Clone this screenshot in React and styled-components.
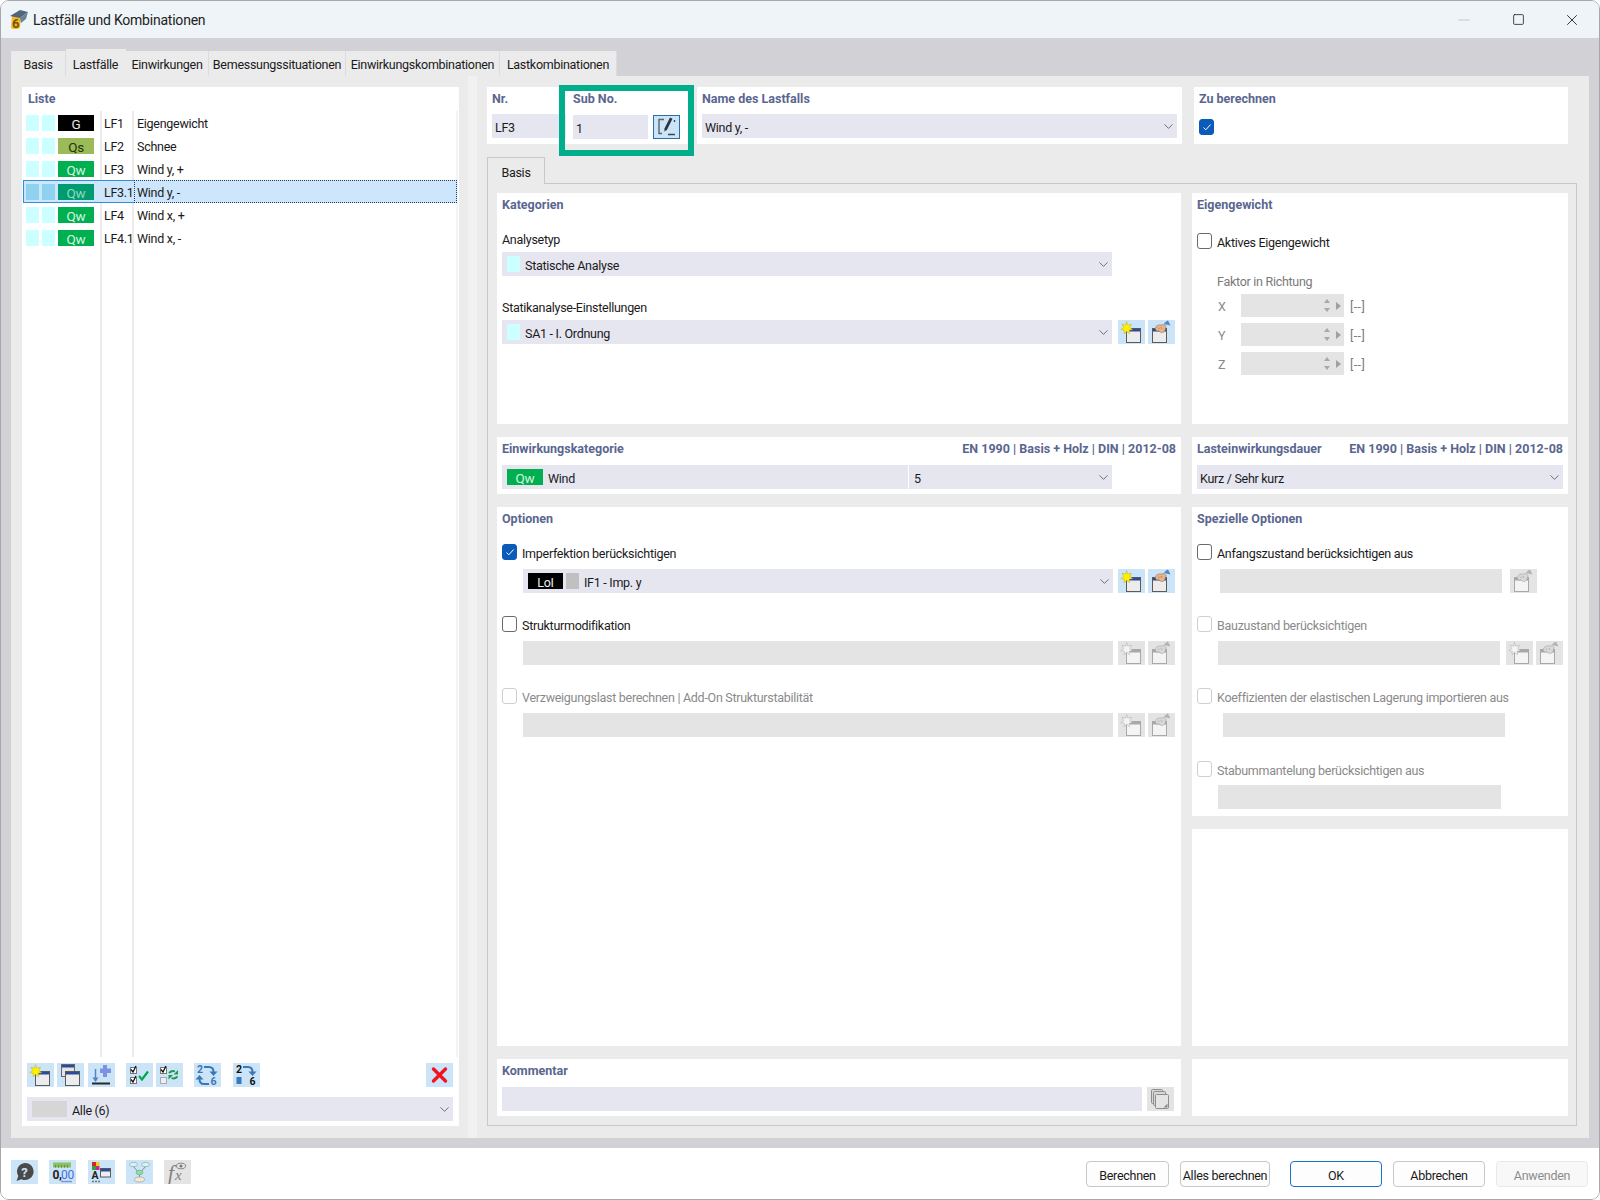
import React from "react";
import styled, { createGlobalStyle } from "styled-components";
import { ChevronDown, Square, X, Minus } from "lucide-react";

const GlobalStyle = createGlobalStyle`
  html, body {
    margin: 0;
    padding: 0;
    background: #fff;
  }
  * {
    box-sizing: border-box;
  }
`;

const font = `Roboto, "Open Sans", sans-serif`;

const tabs = ["Basis", "Lastfälle", "Einwirkungen", "Bemessungssituationen", "Einwirkungskombinationen", "Lastkombinationen"];
const tabWidths = [55, 60, 83, 137, 154, 117];

const rows = [
  { badge: "G", kind: "g", id: "LF1", name: "Eigengewicht" },
  { badge: "Qs", kind: "qs", id: "LF2", name: "Schnee" },
  { badge: "Qw", kind: "qw", id: "LF3", name: "Wind y, +" },
  { badge: "Qw", kind: "qw", id: "LF3.1", name: "Wind y, -", selected: true },
  { badge: "Qw", kind: "qw", id: "LF4", name: "Wind x, +" },
  { badge: "Qw", kind: "qw", id: "LF4.1", name: "Wind x, -" },
];

function WindowGlyph({ x = 6, y = 7, w = 14, h = 14, disabled }) {
  return (
    <g>
      <rect x={x + 0.5} y={y + 0.5} width={w} height={h} fill={disabled ? "#f4f4f4" : "#ececec"} stroke={disabled ? "#a8a8a8" : "#5a5a5a"} />
      <rect x={x + 1} y={y + 1} width={w - 1} height="2.500" fill={disabled ? "#a8a8a8" : "#2d4a9a"} />
    </g>
  );
}

function NewIcon({ disabled }) {
  return (
    <svg width="27" height="24" viewBox="0 0 27 24">
      <WindowGlyph x={8} y={8} disabled={disabled} />
      <path d="M8.500 1.500l1.300 3.700 3.700-1-1.800 3.400 3 2-3.500.6.300 3.600-2.800-2.500-2.600 2.500.2-3.600-3.500-.6 3-2-1.800-3.400 3.700 1z" fill={disabled ? "#f4f4f4" : "#fff200"} stroke={disabled ? "#a8a8a8" : "#c0a830"} strokeWidth="0.500" />
    </svg>
  );
}

function PickIcon({ disabled }) {
  return (
    <svg width="27" height="24" viewBox="0 0 27 24">
      <WindowGlyph x={4} y={8} disabled={disabled} />
      <path d="M7 8.500c1-3 3.500-4 6-3.500l3.500-.5 1.500 2-1 4c-1 2-3 2.500-5 1.500l-1.500-1.500-1.500 1z" fill={disabled ? "#d8d8d8" : "#e6b48c"} stroke={disabled ? "#9a9a9a" : "#8b6240"} strokeWidth="0.500" />
      <path d="M10 7.500l1.500 1.500M13 7l1 2" stroke={disabled ? "#9a9a9a" : "#8b6240"} strokeWidth="0.600" />
      <path d="M16 4c1-2 2.500-3 4-3.500l2.500 5z" fill={disabled ? "#b4b4b4" : "#4f87c8"} />
    </svg>
  );
}

function EditIcon() {
  return (
    <svg width="25" height="22" viewBox="0 0 25 22">
      <path d="M10 3.500H5v14h3" fill="none" stroke="#5a6270" strokeWidth="1.400" />
      <path d="M16 1.500l2.500 1.300-5.500 11-2.600 1.700.1-3z" fill="#2e3440" />
      <path d="M20.500 4v2M14 18.500h7" stroke="#3e4654" strokeWidth="1.400" />
    </svg>
  );
}

function CopyNewIcon() {
  return (
    <svg width="27" height="24" viewBox="0 0 27 24">
      <rect x="4.500" y="1.500" width="13" height="12" fill="#e4e4e4" stroke="#666" />
      <rect x="5" y="2" width="12" height="2.500" fill="#2d4a9a" />
      <rect x="8.500" y="8.500" width="14" height="14" fill="#ececec" stroke="#5a5a5a" />
      <rect x="9" y="9" width="13" height="2.500" fill="#2d4a9a" />
    </svg>
  );
}

function AddBelowIcon() {
  return (
    <svg width="27" height="24" viewBox="0 0 27 24">
      <path d="M15 2h4v3.500h4v4.500h-4v4h-4v-4h-3V5.500h3z" fill="#7b93e0" />
      <path d="M7.500 6v12" stroke="#4f87c8" strokeWidth="1.500" />
      <path d="M4.500 14.500l3 4.500 3-4.500z" fill="#4f87c8" />
      <path d="M4 20.500h18" stroke="#2a2a2a" strokeWidth="1.800" />
    </svg>
  );
}

function CheckAllIcon() {
  return (
    <svg width="27" height="24" viewBox="0 0 27 24">
      <rect x="4.500" y="4.500" width="6" height="6" fill="#fff" stroke="#777" />
      <rect x="4.500" y="14.500" width="6" height="6" fill="#fff" stroke="#777" />
      <path d="M5 6.500l2 2.500 3-6M5 16.500l2 2.500 3-6" fill="none" stroke="#111" strokeWidth="1.300" />
      <path d="M13 13l3 3.500 6-8" fill="none" stroke="#00a84f" strokeWidth="2.200" />
    </svg>
  );
}

function InvertIcon() {
  return (
    <svg width="27" height="24" viewBox="0 0 27 24">
      <rect x="4.500" y="4.500" width="6" height="6" fill="#fff" stroke="#777" />
      <rect x="4.500" y="14.500" width="6" height="6" fill="#e8eef4" stroke="#aaa" />
      <path d="M5 6.500l2 2.500 3-6" fill="none" stroke="#111" strokeWidth="1.300" />
      <path d="M13 10c2-2 4-2.500 6-1.500M21.500 13.500c-2 2-4 2.500-6 1.500" fill="none" stroke="#1e9a4b" strokeWidth="1.800" />
      <path d="M22 7v4.500h-4.500zM12.500 16.500V12H17z" fill="#1e9a4b" />
    </svg>
  );
}

function RenumberIcon() {
  return (
    <svg width="27" height="24" viewBox="0 0 27 24">
      <text x="3" y="10" fontFamily={font} fontSize="10.500" fontWeight="700" fill="#3a78b8">2</text>
      <text x="16.500" y="22" fontFamily={font} fontSize="10.500" fontWeight="700" fill="#3a78b8">6</text>
      <path d="M10 4h5c3 0 4.500 1.500 4.500 5" fill="none" stroke="#3a78b8" strokeWidth="2" />
      <path d="M15.500 8.500l4 4.500 4-4.500z" fill="#3a78b8" />
      <path d="M15 21h-5c-3 0-4.500-1.500-4.500-5" fill="none" stroke="#3a78b8" strokeWidth="2" />
      <path d="M1.500 16.500l4-4.500 4 4.500z" fill="#3a78b8" />
    </svg>
  );
}

function RenumberBlockIcon() {
  return (
    <svg width="27" height="24" viewBox="0 0 27 24">
      <text x="3" y="10" fontFamily={font} fontSize="10.500" fontWeight="700" fill="#111">2</text>
      <text x="16.500" y="22" fontFamily={font} fontSize="10.500" fontWeight="700" fill="#111">6</text>
      <path d="M10 4h5c3 0 4.500 1.500 4.500 5" fill="none" stroke="#3a78b8" strokeWidth="2" />
      <path d="M15.500 8.500l4 4.500 4-4.500z" fill="#3a78b8" />
      <rect x="3.500" y="14" width="5" height="7" fill="#3a78b8" />
    </svg>
  );
}

function DeleteIcon() {
  return (
    <svg width="27" height="24" viewBox="0 0 27 24">
      <path d="M7.500 6l12 12M19.500 6l-12 12" stroke="#f0141e" strokeWidth="3.400" strokeLinecap="round" />
    </svg>
  );
}

function HelpIcon() {
  return (
    <svg width="27" height="24" viewBox="0 0 27 24">
      <path d="M14 3a8.500 8.500 0 1 1-3.500 16.200L5.500 21l1.800-5A8.500 8.500 0 0 1 14 3z" fill="#4a4a4a" />
      <text x="10.300" y="16.500" fontFamily={font} fontSize="13" fontWeight="700" fill="#cce4f7">?</text>
    </svg>
  );
}

function NumberFormatIcon() {
  return (
    <svg width="27" height="24" viewBox="0 0 27 24">
      <rect x="4" y="2.500" width="18" height="5" fill="#8cc063" />
      <path d="M6.500 5v2.500M9.500 5v2.500M12.500 5v2.500M15.500 5v2.500M18.500 5v2.500" stroke="#5e8e3c" />
      <text x="3.500" y="19" fontFamily={font} fontSize="12" fontWeight="700" fill="#222">0,</text>
      <text x="12" y="19" fontFamily={font} fontSize="12" fill="#3e6fe0">00</text>
      <path d="M12 21.500h11" stroke="#7b93e0" strokeWidth="1.400" />
    </svg>
  );
}

function ColorTextIcon() {
  return (
    <svg width="27" height="24" viewBox="0 0 27 24">
      <rect x="4" y="2" width="4" height="4" fill="#e02020" />
      <rect x="8" y="2" width="3.500" height="4" fill="#e8d020" />
      <rect x="4" y="6" width="4" height="4" fill="#30a040" />
      <rect x="8" y="6" width="3.500" height="4" fill="#d02090" />
      <text x="3.500" y="19" fontFamily={font} fontSize="10.500" fontWeight="700" fill="#222">A</text>
      <path d="M4 21.500h2M7 21.500h2M10 21.500h2" stroke="#777" strokeWidth="1.500" />
      <rect x="12.500" y="8.500" width="10" height="8.500" fill="#eee" stroke="#5a5a5a" />
      <rect x="13" y="9" width="9" height="2.500" fill="#2d4a9a" />
    </svg>
  );
}

function TreeIcon() {
  return (
    <svg width="27" height="24" viewBox="0 0 27 24">
      <path d="M7 6l6 7M20 6l-6 7M13.500 14v5" stroke="#7d8f8f" />
      <ellipse cx="7.500" cy="4.500" rx="4" ry="2.200" fill="#d8f2f2" stroke="#8aa" strokeWidth="0.700" />
      <ellipse cx="19.500" cy="4.500" rx="4" ry="2.200" fill="#d8f2f2" stroke="#8aa" strokeWidth="0.700" />
      <ellipse cx="13.500" cy="12.500" rx="3.500" ry="2.200" fill="#8ce09a" stroke="#7a9" strokeWidth="0.700" />
      <ellipse cx="13.500" cy="19.500" rx="5" ry="2.500" fill="#f0ecd0" stroke="#a99" strokeWidth="0.700" />
    </svg>
  );
}

function FormulaIcon() {
  return (
    <svg width="27" height="24" viewBox="0 0 27 24">
      <text x="4" y="20" fontFamily='"Liberation Serif", serif' fontStyle="italic" fontSize="21" fill="#808080">f</text>
      <text x="11" y="20" fontFamily='"Liberation Serif", serif' fontStyle="italic" fontSize="15" fill="#808080">x</text>
      <ellipse cx="17" cy="6" rx="4.500" ry="2.800" fill="none" stroke="#888" />
      <circle cx="17" cy="6" r="1.500" fill="#777" />
    </svg>
  );
}

function NotesIcon() {
  return (
    <svg width="27" height="24" viewBox="0 0 27 24">
      <rect x="4.500" y="2.500" width="11" height="14" rx="1" fill="#d8d8d8" stroke="#8c8c8c" />
      <rect x="6.500" y="4.500" width="12" height="14" rx="1" fill="#d8d8d8" stroke="#8c8c8c" />
      <rect x="8.500" y="7.500" width="13" height="14" rx="1" fill="#e4e4e4" stroke="#8c8c8c" />
      <path d="M16.500 20.500l4-4v4z" fill="#8c8c8c" />
    </svg>
  );
}

function AppLogo() {
  return (
    <svg width="20" height="20" viewBox="0 0 20 20">
      <path d="M4 6c0-1 3-1 6-.5l3 1-1 11c-2 2-7 2-9 .5z" fill="#f2b927" />
      <path d="M2 6L12 0l8 2-8 6z" fill="#51667a" />
      <path d="M12 8l8-6-2 7-5 4z" fill="#6b8296" />
      <text x="4" y="18" fontFamily={font} fontSize="13" fontWeight="700" fill="#7a5206">6</text>
    </svg>
  );
}

function Select({ width, children }) {
  return (
    <SelectBox $width={width}>
      {children}
      <SelectChevron>
        <ChevronDown size={15} strokeWidth={1.300} />
      </SelectChevron>
    </SelectBox>
  );
}

function Spin({ label }) {
  return (
    <SpinRow>
      <SpinLabel>{label}</SpinLabel>
      <SpinInput>
        <SpinArrows>
          <ArrowUp />
          <ArrowDown />
        </SpinArrows>
        <ArrowRight />
      </SpinInput>
      <SpinUnit>[--]</SpinUnit>
    </SpinRow>
  );
}

function Check({ checked, disabled, children, top }) {
  return (
    <CheckRow $top={top} $disabled={disabled}>
      <CheckBox $checked={checked} $disabled={disabled}>
        {checked && (
          <svg width="10" height="10" viewBox="0 0 10 10">
            <path d="M1.500 5.500l2.300 2.300 4.800-5.300" fill="none" stroke="#fff" strokeWidth="1" />
          </svg>
        )}
      </CheckBox>
      {children && <CheckLabel>{children}</CheckLabel>}
    </CheckRow>
  );
}

export default function App() {
  return (
    <>
      <GlobalStyle />
      <Window>
        <TitleBar>
          <AppLogo />
          <TitleText>Lastfälle und Kombinationen</TitleText>
          <WindowControls>
            <WinButton $muted><Minus size={18} strokeWidth={1} /></WinButton>
            <WinButton><Square size={13} strokeWidth={1.500} /></WinButton>
            <WinButton><X size={18} strokeWidth={1.200} /></WinButton>
          </WindowControls>
        </TitleBar>

        <Body>
          <TabStrip>
            {tabs.map((t, i) => (
              <Tab key={t} $width={tabWidths[i]} $active={i === 1}>{t}</Tab>
            ))}
          </TabStrip>

          <TabPanel>
            <ListPane>
              <CardTitle>Liste</CardTitle>
              <ListBody>
                {rows.map((r) => (
                  <ListRow key={r.id}>
                    <SwatchCell $selected={r.selected}>
                      <CyanSquare $selected={r.selected} />
                      <CyanSquare $selected={r.selected} />
                      <Badge $kind={r.kind} $selected={r.selected}>{r.badge}</Badge>
                    </SwatchCell>
                    <IdCell $selected={r.selected}>{r.id}</IdCell>
                    <NameCell $selected={r.selected}>{r.name}</NameCell>
                  </ListRow>
                ))}
              </ListBody>
              <ListToolbar>
                <IconButton><NewIcon /></IconButton>
                <IconButton $left={3}><CopyNewIcon /></IconButton>
                <IconButton $left={4}><AddBelowIcon /></IconButton>
                <IconButton $left={11}><CheckAllIcon /></IconButton>
                <IconButton $left={3}><InvertIcon /></IconButton>
                <IconButton $left={11}><RenumberIcon /></IconButton>
                <IconButton $left={12}><RenumberBlockIcon /></IconButton>
                <ToolbarSpacer />
                <IconButton><DeleteIcon /></IconButton>
              </ListToolbar>
              <ListFilter>
                <Select>
                  <FilterSwatch />
                  <SelectText>Alle (6)</SelectText>
                </Select>
              </ListFilter>
            </ListPane>

            <Splitter />

            <RightPane>
              <TopRow>
                <NrCard>
                  <CardTitle>Nr.</CardTitle>
                  <InputBox $width={74}>LF3</InputBox>
                </NrCard>
                <SubCard>
                  <CardTitle>Sub No.</CardTitle>
                  <FieldRow $gap={5}>
                    <InputBox $width={75}>1</InputBox>
                    <EditButton><EditIcon /></EditButton>
                  </FieldRow>
                </SubCard>
                <NameCard>
                  <CardTitle>Name des Lastfalls</CardTitle>
                  <SelectGap>
                    <Select>
                      <SelectText $flush>Wind y, -</SelectText>
                    </Select>
                  </SelectGap>
                </NameCard>
                <CalcCard>
                  <CardTitle>Zu berechnen</CardTitle>
                  <CalcCheck>
                    <Check checked />
                  </CalcCheck>
                </CalcCard>
                <Highlight />
              </TopRow>

              <InnerTab>Basis</InnerTab>

              <InnerPane>
                <Card>
                  <CardTitle>Kategorien</CardTitle>
                  <FieldLabel $top={13}>Analysetyp</FieldLabel>
                  <Select width={610}>
                    <CyanField />
                    <SelectText>Statische Analyse</SelectText>
                  </Select>
                  <FieldLabel $top={21}>Statikanalyse-Einstellungen</FieldLabel>
                  <FieldRow $gap={0}>
                    <Select width={610}>
                      <CyanField />
                      <SelectText>SA1 - I. Ordnung</SelectText>
                    </Select>
                    <IconButton $left={6}><NewIcon /></IconButton>
                    <IconButton $left={3}><PickIcon /></IconButton>
                  </FieldRow>
                </Card>

                <Card>
                  <CardTitle>Eigengewicht</CardTitle>
                  <Check top={17}>Aktives Eigengewicht</Check>
                  <FactorLabel>Faktor in Richtung</FactorLabel>
                  <Spin label="X" />
                  <Spin label="Y" />
                  <Spin label="Z" />
                </Card>

                <Card>
                  <TitleRow>
                    <CardTitle>Einwirkungskategorie</CardTitle>
                    <CardTitle>EN 1990 | Basis + Holz | DIN | 2012-08</CardTitle>
                  </TitleRow>
                  <Select width={610}>
                    <WindCell>
                      <Badge $kind="qw" $inset>Qw</Badge>
                      <WindLabel>Wind</WindLabel>
                    </WindCell>
                    <SelectDivider />
                    <SelectText $flush>5</SelectText>
                  </Select>
                </Card>

                <Card>
                  <TitleRow>
                    <CardTitle>Lasteinwirkungsdauer</CardTitle>
                    <CardTitle>EN 1990 | Basis + Holz | DIN | 2012-08</CardTitle>
                  </TitleRow>
                  <Select>
                    <SelectText $flush>Kurz / Sehr kurz</SelectText>
                  </Select>
                </Card>

                <Card>
                  <CardTitle>Optionen</CardTitle>
                  <Check checked top={14}>Imperfektion berücksichtigen</Check>
                  <OptionField $left={21}>
                    <Select width={590}>
                      <LolBadge>LoI</LolBadge>
                      <GreySquare />
                      <SelectText>IF1 - Imp. y</SelectText>
                    </Select>
                    <IconButton $left={5}><NewIcon /></IconButton>
                    <IconButton $left={3}><PickIcon /></IconButton>
                  </OptionField>
                  <Check top={23}>Strukturmodifikation</Check>
                  <OptionField $left={21}>
                    <DisabledInput $width={590} />
                    <IconButton $left={5} $disabled><NewIcon disabled /></IconButton>
                    <IconButton $left={3} $disabled><PickIcon disabled /></IconButton>
                  </OptionField>
                  <Check disabled top={23}>Verzweigungslast berechnen | Add-On Strukturstabilität</Check>
                  <OptionField $left={21}>
                    <DisabledInput $width={590} />
                    <IconButton $left={5} $disabled><NewIcon disabled /></IconButton>
                    <IconButton $left={3} $disabled><PickIcon disabled /></IconButton>
                  </OptionField>
                </Card>

                <RightStack>
                  <SpecialCard>
                    <CardTitle>Spezielle Optionen</CardTitle>
                    <Check top={14}>Anfangszustand berücksichtigen aus</Check>
                    <OptionField $left={23}>
                      <DisabledInput $width={282} />
                      <IconButton $left={8} $disabled><PickIcon disabled /></IconButton>
                    </OptionField>
                    <Check disabled top={23}>Bauzustand berücksichtigen</Check>
                    <OptionField $left={21}>
                      <DisabledInput $width={282} />
                      <IconButton $left={6} $disabled><NewIcon disabled /></IconButton>
                      <IconButton $left={3} $disabled><PickIcon disabled /></IconButton>
                    </OptionField>
                    <Check disabled top={23}>Koeffizienten der elastischen Lagerung importieren aus</Check>
                    <OptionField $left={26}>
                      <DisabledInput $width={282} />
                    </OptionField>
                    <Check disabled top={24}>Stabummantelung berücksichtigen aus</Check>
                    <OptionField $left={21} $top={8}>
                      <DisabledInput $width={283} />
                    </OptionField>
                  </SpecialCard>
                  <Card />
                </RightStack>

                <Card>
                  <CardTitle>Kommentar</CardTitle>
                  <FieldRow $gap={5}>
                    <InputBox $width={640} />
                    <IconButton $disabled><NotesIcon /></IconButton>
                  </FieldRow>
                </Card>

                <Card />
              </InnerPane>
            </RightPane>
          </TabPanel>
        </Body>

        <Footer>
          <FooterIcons>
            <IconButton><HelpIcon /></IconButton>
            <IconButton $left={11}><NumberFormatIcon /></IconButton>
            <IconButton $left={12}><ColorTextIcon /></IconButton>
            <IconButton $left={11}><TreeIcon /></IconButton>
            <IconButton $left={11} $disabled><FormulaIcon /></IconButton>
          </FooterIcons>
          <FooterButtons>
            <DialogButton $width={83}>Berechnen</DialogButton>
            <DialogButton $width={90} $left={11}>Alles berechnen</DialogButton>
            <DialogButton $width={92} $left={20} $primary>OK</DialogButton>
            <DialogButton $width={92} $left={11}>Abbrechen</DialogButton>
            <DialogButton $width={92} $left={11} $disabled>Anwenden</DialogButton>
          </FooterButtons>
        </Footer>
      </Window>
    </>
  );
}

const Window = styled.div`
  width: 1600px;
  height: 1200px;
  display: flex;
  flex-direction: column;
  background: #fff;
  border: 1px solid #a8a8a8;
  border-radius: 9px;
  overflow: hidden;
  font-family: ${font};
  font-size: 12.500px;
  letter-spacing: -0.28px;
  color: #1a1a1a;
`;

const TitleBar = styled.div`
  height: 37px;
  flex: none;
  display: flex;
  align-items: center;
  padding-left: 7px;
  background: #eff4f9;
`;

const TitleText = styled.div`
  margin-left: 5px;
  padding-top: 1px;
  font-size: 14px;
  letter-spacing: -0.22px;
  color: #222;
`;

const WindowControls = styled.div`
  margin-left: auto;
  display: flex;
`;

const WinButton = styled.div`
  width: 54px;
  height: 37px;
  display: flex;
  align-items: center;
  justify-content: center;
  color: ${(p) => (p.$muted ? "#b4b8bc" : "#222")};
`;

const Body = styled.div`
  flex: 1;
  min-height: 0;
  display: flex;
  flex-direction: column;
  padding: 11px 10px 10px 10px;
  background: #d2d2d6;
`;

const TabStrip = styled.div`
  height: 27px;
  flex: none;
  display: flex;
  align-items: flex-end;
`;

const Tab = styled.div`
  width: ${(p) => p.$width}px;
  height: ${(p) => (p.$active ? 27 : 25)}px;
  display: flex;
  align-items: center;
  justify-content: center;
  padding-top: ${(p) => (p.$active ? 3 : 1)}px;
  background: #ebebeb;
  border-right: 1px solid ${(p) => (p.$active ? "transparent" : "#dcdce0")};
  white-space: nowrap;
`;

const TabPanel = styled.div`
  flex: 1;
  min-height: 0;
  display: flex;
  padding: 11px 12px 12px 11px;
  background: #ebebeb;
`;

const ListPane = styled.div`
  width: 437px;
  flex: none;
  display: flex;
  flex-direction: column;
  background: #fff;
`;

const CardTitle = styled.div`
  height: 23px;
  display: flex;
  align-items: center;
  font-weight: 700;
  letter-spacing: 0;
  color: #5a6690;
  white-space: nowrap;
  margin-bottom: 1px;
  ${ListPane} > & {
    padding-left: 6px;
  }
`;

const ListBody = styled.div`
  flex: 1;
  min-height: 0;
  padding-left: 1px;
  background:
    linear-gradient(#ececec, #ececec) 78px 0 / 2px 100% no-repeat,
    linear-gradient(#ececec, #ececec) 110px 0 / 2px 100% no-repeat,
    linear-gradient(#f4f4f4, #f4f4f4) 434px 0 / 2px 100% no-repeat;
`;

const ListRow = styled.div`
  height: 23px;
  display: flex;
  width: 434px;
`;

const SwatchCell = styled.div`
  width: 78px;
  flex: none;
  display: flex;
  align-items: center;
  gap: 3px;
  padding-left: 2px;
  background: ${(p) => (p.$selected ? "#cde6fb" : "transparent")};
  border: 1px solid ${(p) => (p.$selected ? "#2f8fd8" : "transparent")};
  border-right: none;
`;

const CyanSquare = styled.div`
  width: 13px;
  height: 16px;
  background: ${(p) => (p.$selected ? "#8fd2f0" : "#ccffff")};
`;

const badgeColors = {
  g: { bg: "#000", fg: "#e8e8e8", sel: "#000" },
  qs: { bg: "#9bbb59", fg: "#26340c", sel: "#8fb26c" },
  qw: { bg: "#00b050", fg: "#d4f4e0", sel: "#009b6e" },
};

const Badge = styled.div`
  width: 36px;
  height: 16px;
  flex: none;
  display: flex;
  align-items: center;
  justify-content: center;
  padding-top: 2px;
  margin-left: ${(p) => (p.$inset ? 5 : 0)}px;
  font-size: 13.500px;
  background: ${(p) => (p.$selected ? badgeColors[p.$kind].sel : badgeColors[p.$kind].bg)};
  color: ${(p) => (p.$selected ? "#8fd8c0" : badgeColors[p.$kind].fg)};
`;

const IdCell = styled.div`
  width: 33px;
  flex: none;
  display: flex;
  align-items: center;
  padding: 2px 0 0 3px;
  background: ${(p) => (p.$selected ? "#cde6fb" : "transparent")};
  border: 1px solid ${(p) => (p.$selected ? "#2f8fd8" : "transparent")};
  border-left: none;
  border-right: none;
  white-space: nowrap;
`;

const NameCell = styled.div`
  flex: 1;
  display: flex;
  align-items: center;
  padding: 2px 0 0 2px;
  background: ${(p) => (p.$selected ? "#cde6fb" : "transparent")};
  border: 1px dotted ${(p) => (p.$selected ? "#1d3f66" : "transparent")};
`;

const ListToolbar = styled.div`
  height: 24px;
  flex: none;
  display: flex;
  margin: 6px 6px 0 5px;
`;

const ToolbarSpacer = styled.div`
  flex: 1;
`;

const IconButton = styled.div`
  width: 27px;
  height: 24px;
  flex: none;
  margin-left: ${(p) => p.$left ?? 0}px;
  background: ${(p) => (p.$disabled ? "#e4e4e4" : "#cce4f7")};
  svg {
    display: block;
  }
`;

const ListFilter = styled.div`
  margin: 10px 6px 5px 5px;
`;

const SelectBox = styled.div`
  width: ${(p) => (p.$width ? `${p.$width}px` : "100%")};
  height: 24px;
  flex: none;
  display: flex;
  align-items: center;
  background: #e6e6f1;
  white-space: nowrap;
`;

const SelectGap = styled.div`
  margin-top: 4px;
`;

const SelectChevron = styled.div`
  margin-left: auto;
  width: 18px;
  display: flex;
  align-items: center;
  justify-content: center;
  color: #555;
`;

const SelectText = styled.div`
  margin-left: ${(p) => (p.$flush ? 3 : 5)}px;
  padding-top: 2px;
`;

const FilterSwatch = styled.div`
  width: 35px;
  height: 16px;
  margin-left: 5px;
  background: #d6d6d6;
`;

const Splitter = styled.div`
  width: 9px;
  flex: none;
  margin: -11px 10px -12px 9px;
  background: #f1f1f1;
`;

const RightPane = styled.div`
  width: 1090px;
  flex: none;
  display: flex;
  flex-direction: column;
  min-height: 0;
`;

const TopRow = styled.div`
  position: relative;
  height: 57px;
  flex: none;
  display: flex;
`;

const TopCard = styled.div`
  background: #fff;
  padding: 0 5px;
`;

const NrCard = styled(TopCard)`
  width: 81px;
  padding-right: 2px;
`;

const SubCard = styled(TopCard)`
  width: 122px;
`;

const NameCard = styled(TopCard)`
  width: 485px;
  margin-left: 7px;
`;

const CalcCard = styled(TopCard)`
  width: 374px;
  margin-left: 12px;
`;

const CalcCheck = styled.div`
  padding-top: 8px;
`;

const InputBox = styled.div`
  width: ${(p) => p.$width}px;
  height: 24px;
  flex: none;
  display: flex;
  align-items: center;
  padding: 2px 0 0 3px;
  background: #e6e6f1;
  margin-top: 4px;
`;

const FieldRow = styled.div`
  display: flex;
  align-items: flex-end;
  gap: ${(p) => p.$gap}px;
`;

const EditButton = styled.div`
  width: 27px;
  height: 24px;
  flex: none;
  display: flex;
  align-items: center;
  justify-content: center;
  background: #cce4f7;
  border: 1px solid #2c6ea8;
`;

const Highlight = styled.div`
  position: absolute;
  left: 72px;
  top: -2px;
  width: 135px;
  height: 71px;
  border: 6px solid #00ae8c;
  pointer-events: none;
`;

const InnerTab = styled.div`
  width: 58px;
  height: 27px;
  flex: none;
  margin-top: 13px;
  margin-bottom: -1px;
  padding-top: 2px;
  z-index: 1;
  display: flex;
  align-items: center;
  justify-content: center;
  background: #ebebeb;
  border: 1px solid #c8c8cc;
  border-bottom: none;
`;

const InnerPane = styled.div`
  flex: 1;
  min-height: 0;
  display: grid;
  grid-template-columns: 684px 376px;
  grid-template-rows: 231px 57px 539px 57px;
  column-gap: 11px;
  row-gap: 13px;
  padding: 9px 8px 9px 9px;
  border: 1px solid #c8c8cc;
`;

const Card = styled.div`
  min-height: 0;
  padding: 0 5px;
  background: #fff;
  flex: 1;
`;

const TitleRow = styled.div`
  display: flex;
  justify-content: space-between;
  margin-bottom: 4px;
`;

const FieldLabel = styled.div`
  height: 18px;
  display: flex;
  align-items: center;
  padding-top: 2px;
  margin-top: ${(p) => p.$top}px;
  margin-bottom: 5px;
`;

const CyanField = styled.div`
  width: 13px;
  height: 16px;
  margin-left: 5px;
  background: #ccffff;
`;

const CheckRow = styled.div`
  height: 16px;
  display: flex;
  align-items: center;
  gap: 5px;
  margin-top: ${(p) => p.$top ?? 0}px;
  color: ${(p) => (p.$disabled ? "#8a8a8a" : "#1a1a1a")};
  white-space: nowrap;
`;

const CheckLabel = styled.div`
  padding-top: 2px;
`;

const CheckBox = styled.div`
  width: 15px;
  height: 16px;
  flex: none;
  display: flex;
  align-items: center;
  justify-content: center;
  border-radius: 3px;
  background: ${(p) => (p.$checked ? "#0b5cb8" : "#fff")};
  border: 1px solid ${(p) => (p.$checked ? "#0b5cb8" : p.$disabled ? "#cfcfcf" : "#6a6a6a")};
`;

const FactorLabel = styled.div`
  height: 18px;
  display: flex;
  align-items: center;
  margin: 23px 0 4px 20px;
  color: #7a7a7a;
`;

const SpinRow = styled.div`
  height: 23px;
  display: flex;
  align-items: center;
  margin-bottom: 6px;
  margin-left: 21px;
`;

const SpinLabel = styled.div`
  width: 23px;
  padding-top: 2px;
  color: #8a8a8a;
`;

const SpinInput = styled.div`
  width: 103px;
  height: 23px;
  display: flex;
  align-items: center;
  justify-content: flex-end;
  gap: 6px;
  padding-right: 3px;
  background: #e4e4e4;
`;

const SpinArrows = styled.div`
  display: flex;
  flex-direction: column;
  gap: 5px;
`;

const ArrowUp = styled.div`
  width: 0;
  height: 0;
  border: 3px solid transparent;
  border-top: none;
  border-bottom: 4px solid #a8a8a8;
`;

const ArrowDown = styled.div`
  width: 0;
  height: 0;
  border: 3px solid transparent;
  border-bottom: none;
  border-top: 4px solid #a8a8a8;
`;

const ArrowRight = styled.div`
  width: 0;
  height: 0;
  border: 4px solid transparent;
  border-right: none;
  border-left: 5px solid #a0a0a0;
`;

const SpinUnit = styled.div`
  margin-left: 6px;
  padding-top: 2px;
  letter-spacing: 0.4px;
  color: #7a7a7a;
`;

const WindCell = styled.div`
  width: 406px;
  flex: none;
  display: flex;
  align-items: center;
`;

const WindLabel = styled.div`
  margin-left: 5px;
  padding-top: 2px;
`;

const SelectDivider = styled.div`
  width: 1px;
  height: 24px;
  margin-right: 2px;
  background: #fff;
`;

const RightStack = styled.div`
  min-height: 0;
  display: flex;
  flex-direction: column;
  gap: 13px;
`;

const SpecialCard = styled(Card)`
  flex: none;
  height: 309px;
`;

const OptionField = styled.div`
  display: flex;
  margin-top: ${(p) => p.$top ?? 9}px;
  padding-left: ${(p) => p.$left}px;
`;

const DisabledInput = styled.div`
  width: ${(p) => p.$width}px;
  height: 24px;
  flex: none;
  background: #e4e4e4;
`;

const LolBadge = styled.div`
  width: 35px;
  height: 16px;
  margin-left: 5px;
  padding-top: 2px;
  display: flex;
  align-items: center;
  justify-content: center;
  background: #000;
  color: #eee;
`;

const GreySquare = styled.div`
  width: 13px;
  height: 16px;
  margin-left: 3px;
  background: #c0c0c0;
`;

const Footer = styled.div`
  height: 51px;
  flex: none;
  display: flex;
  align-items: flex-start;
  justify-content: space-between;
  background: #fff;
`;

const FooterIcons = styled.div`
  display: flex;
  margin-top: 12px;
  margin-left: 10px;
`;

const FooterButtons = styled.div`
  display: flex;
  margin-top: 13px;
  margin-right: 11px;
`;

const DialogButton = styled.div`
  width: ${(p) => p.$width}px;
  height: 26px;
  margin-left: ${(p) => p.$left ?? 0}px;
  padding-top: 2px;
  display: flex;
  align-items: center;
  justify-content: center;
  border-radius: 4px;
  background: ${(p) => (p.$disabled ? "#f8f8f8" : "#fdfdfd")};
  border: 1px solid ${(p) => (p.$primary ? "#1a73c8" : p.$disabled ? "#e8e8e8" : "#c8c8c8")};
  color: ${(p) => (p.$disabled ? "#8c8c8c" : "#1a1a1a")};
  white-space: nowrap;
`;
